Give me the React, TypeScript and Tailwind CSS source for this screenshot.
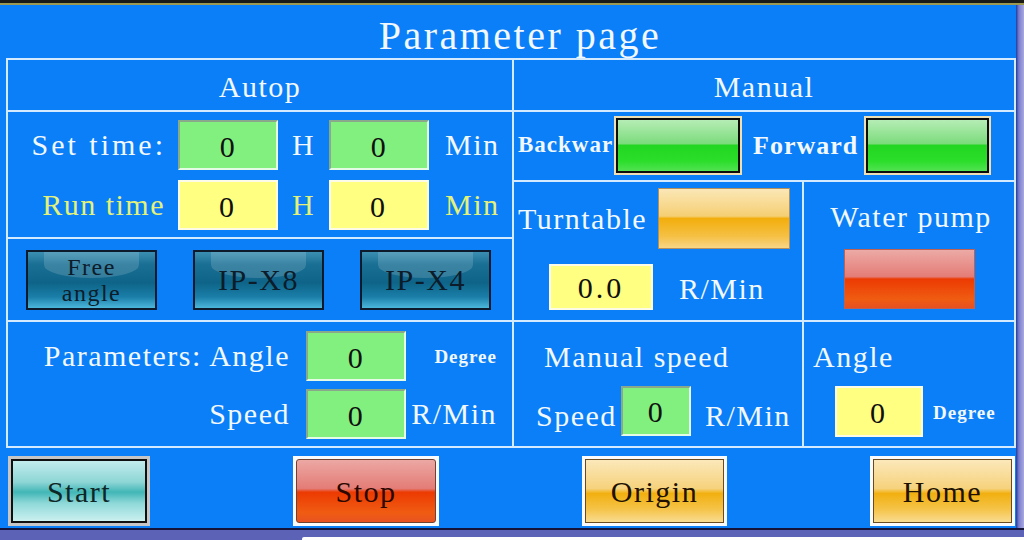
import type { ReactElement, ReactNode } from "react";

// HMI style "Parameter page" panel. Serif text with a bit of tracking so it
// reads like the half-width glyphs of the panel font.

function T({ children, className = "" }: { children: ReactNode; className?: string }): ReactElement {
  return <span className={`inline-block leading-none whitespace-pre ${className}`}>{children}</span>;
}

function GreenBox({ value, className = "" }: { value: string; className?: string }): ReactElement {
  return (
    <div
      className={`flex items-center justify-center bg-[#82f07e] border-2 border-t-[#8aa88a] border-l-[#8aa88a] border-r-[#e6fbe6] border-b-[#e6fbe6] text-[30px] text-[#101010] ${className}`}
    >
      <T className="pt-[3px]">{value}</T>
    </div>
  );
}

function YellowBox({ value, className = "" }: { value: string; className?: string }): ReactElement {
  return (
    <div className={`flex items-center justify-center bg-[#ffff82] border-2 border-[#fbfbe8] text-[30px] tracking-[3px] text-[#101010] ${className}`}>
      <T className="pt-[3px]">{value}</T>
    </div>
  );
}

function ModeButton({ children }: { children: ReactNode }): ReactElement {
  return (
    <div className="relative w-[131px] h-[60px] border-2 border-[#0c1a2c] bg-[linear-gradient(to_bottom,#3b8fb2_0%,#1a6f94_22%,#0e6488_55%,#1a7ea8_80%,#4cb6da_100%)] overflow-hidden flex items-center justify-center">
      <div className="absolute top-0 left-[16px] right-[16px] h-[26px] rounded-b-[50%] bg-[#ffffff]/15" />
      <div className="relative text-center text-[#0c1c2a] tracking-[1.5px]">{children}</div>
    </div>
  );
}

const glossGreen =
  "w-full h-full border-2 border-[#0c0c0c] bg-[linear-gradient(to_bottom,#b6ecb6_0%,#7cdc7c_46%,#22d622_50%,#2ade2a_80%,#52e252_100%)]";

export default function App(): ReactElement {
  return (
    <div className="w-[1024px] h-[540px] overflow-hidden flex flex-col bg-[#0a7ff7] font-['Liberation_Serif','Noto_Sans_CJK_SC',serif] text-[#f2f8ff]">
      <div className="h-[5px] bg-[#1a1a16] border-b-2 border-[#9c9a52]" />

      <div className="flex h-[523px]">
        <div className="w-[1016px] flex flex-col">
          {/* title */}
          <div className="h-[53px] flex items-center justify-center pt-[8px] pl-[24px] text-[40px] tracking-[2.5px]">
            <T>Parameter page</T>
          </div>

          {/* table */}
          <div className="ml-[6px] w-[1010px] h-[390px] border-2 border-[#d4eaff] flex text-[30px] tracking-[1.5px]">
            {/* left: Autop */}
            <div className="w-[506px] border-r-2 border-[#d4eaff] flex flex-col">
              <div className="h-[52px] border-b-2 border-[#d4eaff] flex items-center justify-center pt-[4px]">
                <T>Autop</T>
              </div>

              <div className="h-[127px] border-b-2 border-[#d4eaff] pt-[8px] grid grid-cols-[170px_100px_51px_100px_1fr] grid-rows-[50px_50px] gap-y-[10px]">
                <div className="flex items-center justify-end pr-[12px]"><T className="tracking-[3px]">Set time:</T></div>
                <GreenBox value="0" />
                <div className="flex items-center justify-center"><T>H</T></div>
                <GreenBox value="0" />
                <div className="flex items-center pl-[16px]"><T>Min</T></div>

                <div className="flex items-center justify-end pr-[13px] text-[#e4f27a]"><T>Run time</T></div>
                <YellowBox value="0" />
                <div className="flex items-center justify-center text-[#e4f27a]"><T>H</T></div>
                <YellowBox value="0" />
                <div className="flex items-center pl-[16px] text-[#e4f27a]"><T>Min</T></div>
              </div>

              <div className="h-[83px] border-b-2 border-[#d4eaff] flex items-center pl-[18px] gap-[36px]">
                <ModeButton>
                  <div className="text-[24px] leading-[26px] pt-[1px]">
                    <div>Free</div>
                    <div>angle</div>
                  </div>
                </ModeButton>
                <ModeButton>
                  <span className="text-[30px]"><T>IP-X8</T></span>
                </ModeButton>
                <ModeButton>
                  <span className="text-[30px]"><T>IP-X4</T></span>
                </ModeButton>
              </div>

              <div className="flex-1 pt-[9px] grid grid-cols-[298px_100px_1fr] grid-rows-[50px_50px] gap-y-[8px]">
                <div className="flex items-center justify-end pr-[16px]"><T>Parameters: Angle</T></div>
                <GreenBox value="0" />
                <div className="flex items-center justify-end pr-[15px] text-[19px] tracking-[1px] font-bold"><T>Degree</T></div>

                <div className="flex items-center justify-end pr-[16px]"><T>Speed</T></div>
                <GreenBox value="0" />
                <div className="flex items-center justify-end pr-[15px]"><T>R/Min</T></div>
              </div>
            </div>

            {/* right: Manual */}
            <div className="flex-1 flex flex-col">
              <div className="h-[52px] border-b-2 border-[#d4eaff] flex items-center justify-center pt-[4px]">
                <T>Manual</T>
              </div>

              <div className="h-[70px] border-b-2 border-[#d4eaff] flex items-center pl-[4px] pb-[2px] font-bold">
                <span className="w-[96px] text-[23px] tracking-[1px]"><T>Backwar</T></span>
                <div className="w-[128px] h-[59px] border-2 border-[#eee0b4] bg-[#eee0b4]">
                  <div className={glossGreen} />
                </div>
                <span className="ml-[11px] w-[111px] text-[26px] tracking-[1px]"><T>Forward</T></span>
                <div className="w-[127px] h-[59px] border-2 border-[#eee0b4] bg-[#eee0b4]">
                  <div className={glossGreen} />
                </div>
              </div>

              <div className="h-[140px] border-b-2 border-[#d4eaff] flex">
                <div className="w-[290px] border-r-2 border-[#d4eaff] pt-[6px] flex flex-col">
                  <div className="flex items-center pl-[4px]">
                    <span className="w-[140px]"><T className="pt-[2px]">Turntable</T></span>
                    <div className="w-[132px] h-[61px] border border-[#b09060] bg-[linear-gradient(to_bottom,#fbe7b6_0%,#f5cf74_46%,#f2ae0c_50%,#f5c044_80%,#f8d686_100%)]" />
                  </div>
                  <div className="mt-[13px] pl-[35px] flex items-center">
                    <YellowBox value="0.0" className="w-[104px] h-[46px]" />
                    <span className="ml-[26px] pt-[4px]"><T>R/Min</T></span>
                  </div>
                </div>
                <div className="flex-1 flex flex-col items-center pt-[20px]">
                  <div className="h-[30px] flex items-center pl-[4px]"><T>Water pump</T></div>
                  <div className="mt-[17px] w-[131px] h-[60px] border border-[#c06050] bg-[linear-gradient(to_bottom,#ecaaa6_0%,#e47c76_46%,#ec3a02_50%,#f05c12_85%,#e65022_100%)]" />
                </div>
              </div>

              <div className="flex-1 flex">
                <div className="w-[290px] border-r-2 border-[#d4eaff] pt-[20px] flex flex-col">
                  <div className="h-[30px] flex items-center pl-[30px]"><T>Manual speed</T></div>
                  <div className="mt-[11px] pl-[22px] flex items-center">
                    <span className="w-[85px] pt-[10px]"><T>Speed</T></span>
                    <GreenBox value="0" className="w-[70px] h-[50px]" />
                    <span className="ml-[14px] pt-[10px]"><T>R/Min</T></span>
                  </div>
                </div>
                <div className="flex-1 pt-[20px] flex flex-col">
                  <div className="h-[30px] flex items-center pl-[9px]"><T>Angle</T></div>
                  <div className="mt-[14px] pl-[31px] flex items-center">
                    <YellowBox value="0" className="w-[88px] h-[51px]" />
                    <span className="ml-[10px] pt-[4px] text-[19px] tracking-[1px] font-bold"><T>Degree</T></span>
                  </div>
                </div>
              </div>
            </div>
          </div>

          {/* bottom command buttons */}
          <div className="flex-1 flex pl-[8px] pt-[8px] gap-[143px] text-[30px] tracking-[1.5px]">
            <div className="w-[142px] h-[70px] p-[3px] bg-[#c6c6c6]">
              <div className="w-full h-full border-2 border-[#101010] flex items-center justify-center text-[#0e2626] bg-[linear-gradient(to_bottom,#c2ecec_0%,#8ed6d6_35%,#42b6b6_52%,#8ed8d8_70%,#cbf0f0_100%)]">
                <T className="pt-[2px]">Start</T>
              </div>
            </div>
            <div className="w-[146px] h-[70px] p-[3px] bg-[#fbfbfb]">
              <div className="w-full h-full border border-[#704030] rounded-[3px] flex items-center justify-center text-[#2a0800] bg-[linear-gradient(to_bottom,#eca8a4_0%,#e47c76_46%,#ec3a02_52%,#f05c12_85%,#e85222_100%)]">
                <T className="pt-[2px]">Stop</T>
              </div>
            </div>
            <div className="w-[145px] h-[70px] p-[3px] bg-[#fbfbfb]">
              <div className="w-full h-full border border-[#6a4a20] flex items-center justify-center text-[#201000] bg-[linear-gradient(to_bottom,#fbe8ba_0%,#f6d27c_46%,#f2b010_54%,#f5c44a_80%,#f9dc92_100%)]">
                <T className="pt-[2px]">Origin</T>
              </div>
            </div>
            <div className="w-[145px] h-[70px] p-[3px] bg-[#fbfbfb]">
              <div className="w-full h-full border border-[#6a4a20] flex items-center justify-center text-[#201000] bg-[linear-gradient(to_bottom,#fbe8ba_0%,#f6d27c_46%,#f2b010_54%,#f5c44a_80%,#f9dc92_100%)]">
                <T className="pt-[2px]">Home</T>
              </div>
            </div>
          </div>
        </div>

        <div className="w-[8px] bg-[linear-gradient(to_right,#1c3c9c,#7a7cd0_35%,#a8aadc)]" />
      </div>

      <div className="h-[12px] flex flex-col">
        <div className="h-[2px] bg-[#14143a]" />
        <div className="flex-1 flex items-end bg-[#5c62b6]">
          <div className="w-[302px]" />
          <div className="flex-1 h-[3px] bg-[#fdfdfd] rounded-tl-[2px]" />
        </div>
      </div>
    </div>
  );
}
